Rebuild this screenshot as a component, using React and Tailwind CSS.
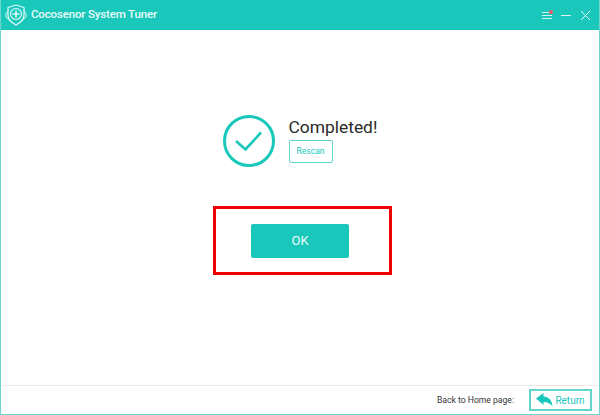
export default function App() {
  return (
    <div className="w-[600px] h-[415px] bg-white flex flex-col border border-t-0 border-[#6fd6ce] font-['Roboto',sans-serif] overflow-hidden">
      <header className="h-[30px] -mx-px bg-[#19c8bb] flex items-center shrink-0">
        <svg className="ml-[3px]" width="26" height="26" viewBox="0 0 26 26" fill="none" stroke="#e6faf8" strokeWidth="1.2" strokeLinejoin="round">
          <path d="M13 3 L21 5.500 V13 C21 18 17 21 13 23 C9 21 5 18 5 13 V5.500 Z" />
          <circle cx="13" cy="12" r="5.500" />
          <path d="M13 8.500 V15.500 M9.500 12 H16.500" strokeWidth="1.500" />
          <path d="M5 9 C1.500 12 2.500 16 6.500 18 M21 9 C24.500 12 23.500 16 19.500 18" strokeWidth="1" />
        </svg>
        <span className="ml-[2px] text-[11.500px] font-medium tracking-[-0.15px] text-[#eafaf9]">Cocosenor System Tuner</span>
        <div className="ml-auto flex items-center mr-[9px]">
          <div className="relative w-[10px] flex flex-col gap-[2px]">
            <span className="h-px bg-[#d5f4f1]" />
            <span className="h-px bg-[#d5f4f1]" />
            <span className="h-px bg-[#d5f4f1]" />
            <span className="absolute -top-[2px] -right-[1px] w-[4px] h-[4px] rounded-full bg-[#f0566e]" />
          </div>
          <span className="ml-[9px] w-[10px] h-px bg-[#d5f4f1]" />
          <svg className="ml-[9px]" width="11" height="11" viewBox="0 0 11 11" stroke="#e0f7f5" strokeWidth="1">
            <path d="M1 1 L10 10 M10 1 L1 10" />
          </svg>
        </div>
      </header>

      <main className="flex-1 flex flex-col items-center pt-[85px]">
        <div className="flex items-start w-[156px] ml-[1px]">
          <svg width="52" height="52" viewBox="0 0 52 52" fill="none" stroke="#19c8bb">
            <circle cx="26" cy="26" r="24.500" strokeWidth="3" />
            <path d="M13 26 L22.500 34.500 L38 17.500" strokeWidth="2.600" />
          </svg>
          <div className="ml-[14px] flex flex-col items-start">
            <h1 className="text-[17.400px] leading-[25px] text-[#2a2a2a]">Completed!</h1>
            <button className="w-[44px] h-[23px] rounded-[2px] border border-[#62d5cc] text-[8.500px] text-[#19c8bb]">Rescan</button>
          </div>
        </div>
        <div className="mt-[39px] ml-[5px] w-[179px] h-[69px] border-[3px] border-[#f00000] flex items-center justify-center">
          <button className="-ml-[5px] w-[98px] h-[34px] rounded-[2px] bg-[#19c8bb] text-[13px] text-[#eafaf9]">OK</button>
        </div>
      </main>

      <footer className="h-[29px] shrink-0 mx-px border-t border-[#e8e8e8] flex items-center justify-end pr-[6px]">
        <span className="text-[8.600px] text-[#333]">Back to Home page:</span>
        <button className="ml-[15px] w-[63px] h-[22px] border-2 border-[#62d5cc] flex items-center justify-center text-[10px] text-[#19c8bb]">
          <svg width="17" height="14" viewBox="0 0 17 14" fill="#19c8bb">
            <path d="M0 5.500 L7.500 0 V3.500 C12.500 3.500 16 7 16.500 13.500 C14.500 10.500 11.500 9 7.500 9 V12 Z" />
          </svg>
          <span className="ml-[2px]">Return</span>
        </button>
      </footer>
    </div>
  );
}
